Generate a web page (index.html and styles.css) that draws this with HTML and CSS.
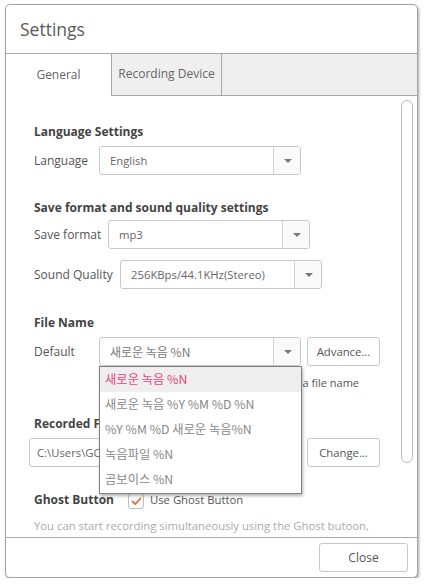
FILE: index.html
```html
<!DOCTYPE html>
<html>
<head>
<meta charset="utf-8">
<link rel="stylesheet" href="styles.css">
</head>
<body>
<div class="window">
  <div class="titlebar">Settings</div>
  <div class="tabs">
    <div class="tab active">General</div>
    <div class="tab">Recording Device</div>
  </div>
  <div class="content">
    <div class="scrollbar"></div>

    <div class="heading">Language Settings</div>
    <div class="row">
      <span class="label l-lang">Language</span>
      <div class="select"><span class="val">English</span><span class="arrow"></span></div>
    </div>

    <div class="heading h-save">Save format and sound quality settings</div>
    <div class="row r-format">
      <span class="label l-format">Save format</span>
      <div class="select"><span class="val">mp3</span><span class="arrow"></span></div>
    </div>
    <div class="row r-quality">
      <span class="label l-quality">Sound Quality</span>
      <div class="select"><span class="val">256KBps/44.1KHz(Stereo)</span><span class="arrow"></span></div>
    </div>

    <div class="heading h-file">File Name</div>
    <div class="row">
      <span class="label l-lang">Default</span>
      <div class="select"><span class="val kr">새로운 녹음 %N</span><span class="arrow"></span></div>
      <button class="btn btn-adv">Advance...</button>
    </div>
    <div class="hint"><span>Set the naming rules for a file name</span></div>

    <div class="heading h-rec">Recorded Files Location</div>
    <div class="row">
      <div class="path">C:\Users\GOM\Documents\GOM\Recorder</div>
      <button class="btn btn-change">Change...</button>
    </div>

    <div class="row r-ghost">
      <span class="heading-inline">Ghost Button</span>
      <span class="checkbox"><svg width="11" height="9" viewBox="0 0 11 9"><path d="M1.5 4.5 L4.2 7.2 L9.5 1.5" fill="none" stroke="#f06a43" stroke-width="1.8" stroke-linecap="round" stroke-linejoin="round"/></svg></span>
      <span class="check-label">Use Ghost Button</span>
    </div>
    <div class="desc">You can start recording simultaneously using the Ghost butoon,</div>

    <ul class="dropdown kr">
      <li class="selected">새로운 녹음 %N</li>
      <li>새로운 녹음 %Y %M %D %N</li>
      <li>%Y %M %D 새로운 녹음%N</li>
      <li>녹음파일 %N</li>
      <li>곰보이스 %N</li>
    </ul>
  </div>
  <div class="footer">
    <button class="btn btn-close">Close</button>
  </div>
</div>
</body>
</html>
```

FILE: styles.css
```css
* { box-sizing: border-box; }
html, body { margin: 0; padding: 0; background: #fff; }
body {
  font-family: "Open Sans", "Noto Sans CJK KR", sans-serif;
  font-size: 12px;
  color: #555;
}
.window {
  margin: 4px 0 0 5px;
  width: 413px;
  height: 574px;
  border: 1px solid #a3a3a3;
  border-radius: 5px;
  box-shadow: 1px 2px 3px rgba(0,0,0,0.35);
  display: flex;
  flex-direction: column;
  overflow: hidden;
  background: #fff;
}
.titlebar {
  height: 49px;
  border-bottom: 1px solid #a8a8a8;
  padding-left: 14px;
  display: flex;
  align-items: center;
  font-size: 17.5px;
  color: #5a5a5a;
  padding-bottom: 1px;
}
.tabs {
  height: 42px;
  background: #efefef;
  border-bottom: 1px solid #a8a8a8;
  display: flex;
}
.tab {
  height: 41px;
  border-right: 1px solid #a8a8a8;
  display: flex;
  align-items: center;
  justify-content: center;
  font-size: 12px;
  color: #666;
  width: 110px;
  padding-bottom: 2px;
}
.tab.active {
  width: 106px;
  background: #fff;
  height: 42px;
  margin-bottom: -1px;
}
.content {
  flex: 1;
  position: relative;
  overflow: hidden;
  padding: 27px 0 0 28px;
}
.scrollbar {
  position: absolute;
  right: 4px;
  top: 4px;
  width: 12px;
  height: 363px;
  border: 1px solid #bdbdbd;
  border-radius: 6px;
  background: #fff;
}
.heading {
  font-weight: 700;
  color: #444;
  font-size: 12px;
  line-height: 18px;
}
.h-save { margin-top: 24px; }
.h-file { margin-top: 25px; }
.h-rec { margin-top: 23px; }
.row {
  display: flex;
  align-items: center;
  margin-top: 5px;
}
.r-format { margin-top: 3px; }
.r-quality { margin-top: 11px; }
.label {
  color: #555;
  line-height: 18px;
  flex: none;
}
.l-lang { width: 65px; }
.l-format { width: 74px; }
.l-quality { width: 86px; }
.select {
  width: 202px;
  height: 29px;
  border: 1px solid #c8c8c8;
  border-radius: 3px;
  display: flex;
  align-items: stretch;
  background: #fff;
}
.select .val {
  flex: 1;
  padding-left: 10px;
  display: flex;
  align-items: center;
  color: #666;
  font-size: 11.3px;
}
.select .arrow {
  width: 27px;
  border-left: 1px solid #d0d0d0;
  background: #fafafa;
  border-radius: 0 3px 3px 0;
  position: relative;
}
.select .arrow::after {
  content: "";
  position: absolute;
  left: 10px;
  top: 12px;
  border-left: 4px solid transparent;
  border-right: 4px solid transparent;
  border-top: 4px solid #777;
}
.kr { font-family: "Noto Sans CJK KR", "Open Sans", sans-serif; }
.select .val.kr { color: #777; font-size: 12px; }
.btn {
  font-family: "Open Sans", sans-serif;
  font-size: 11.3px;
  color: #555;
  background: #fff;
  border: 1px solid #c8c8c8;
  border-radius: 3px;
  height: 29px;
  padding: 0;
}
.btn-adv { width: 73px; margin-left: 6px; }
.hint {
  margin-top: 8px;
  width: 325px;
  text-align: right;
  line-height: 18px;
  color: #555;
  font-size: 11px;
  white-space: nowrap;
}
.path {
  width: 273px;
  height: 29px;
  border: 1px solid #c8c8c8;
  border-radius: 3px;
  margin-left: -5px;
  padding-left: 7px;
  display: flex;
  align-items: center;
  white-space: nowrap;
  overflow: hidden;
  color: #666;
  font-size: 11.3px;
}
.btn-change { width: 73px; margin-left: 5px; }
.r-ghost { margin-top: 24px; }
.heading-inline {
  font-weight: 700;
  color: #444;
  line-height: 18px;
  width: 94px;
}
.checkbox {
  width: 16px;
  height: 16px;
  border: 1px solid #bdbdbd;
  border-radius: 3px;
  display: flex;
  align-items: center;
  justify-content: center;
  margin-right: 6px;
  margin-top: 2px;
}
.check-label { color: #555; line-height: 16px; font-size: 11.3px; }
.desc {
  margin-top: 8px;
  color: #aaa;
  line-height: 18px;
  white-space: nowrap;
  font-size: 11.3px;
}
.dropdown {
  position: absolute;
  left: 93px;
  top: 270px;
  width: 203px;
  margin: 0;
  padding: 0 0 1px 0;
  list-style: none;
  background: #fff;
  border: 1px solid #808080;
  box-shadow: 1px 2px 3px rgba(0,0,0,0.3);
}
.dropdown li {
  height: 25px;
  line-height: 25px;
  padding-left: 5px;
  color: #888;
  font-size: 12.3px;
}
.dropdown li.selected {
  background: #eeeeee;
  color: #e8457c;
}
.footer {
  height: 40px;
  border-top: 1px solid #a8a8a8;
  display: flex;
  justify-content: flex-end;
  align-items: flex-start;
  padding: 5px 9px 0 0;
}
.btn-close { width: 89px; font-size: 12px; }
```
